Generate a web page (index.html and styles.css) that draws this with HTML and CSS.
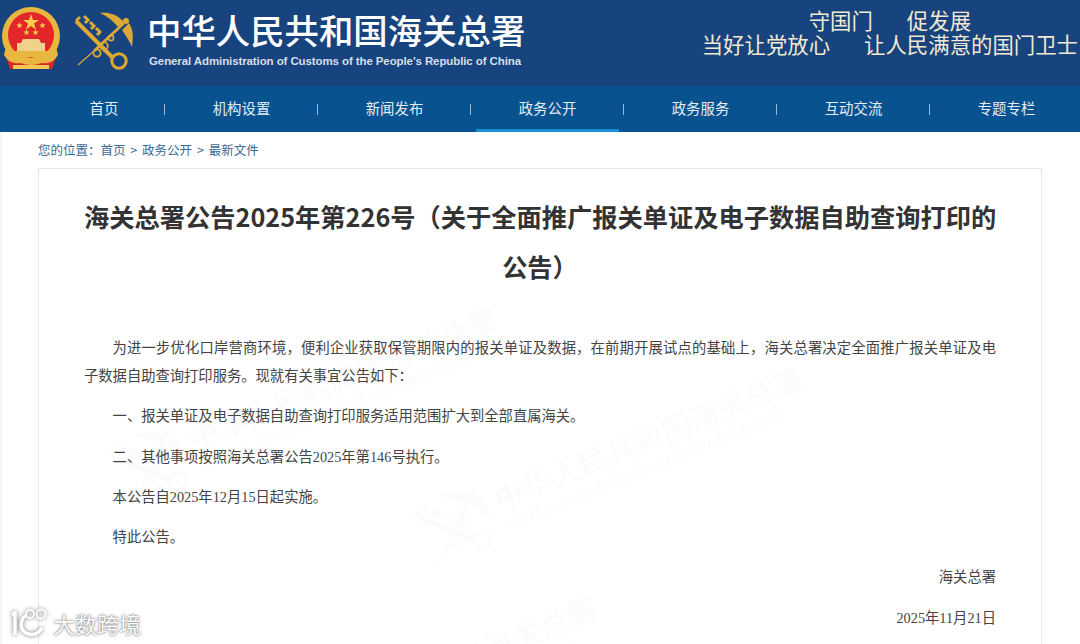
FILE: index.html
```html
<!DOCTYPE html>
<html lang="zh-CN">
<head>
  <meta charset="UTF-8">
  <title>海关总署公告2025年第226号</title>
  <link rel="stylesheet" href="styles.css">
</head>
<body>

  <svg class="defs" width="0" height="0" aria-hidden="true">
    <symbol id="customs-mark" viewBox="0 0 60 60">
      <!-- caduceus -->
      <path d="M4 54 L20 40" fill="none" stroke="currentColor" stroke-width="1.2"/>
      <path d="M20 40 L50 12" fill="none" stroke="currentColor" stroke-width="2.8"/>
      <circle cx="52" cy="10" r="3" fill="currentColor"/>
      <path d="M50 11 C43 3 34 1 26 2 C33 5 38 9 44 16 Z" fill="currentColor"/>
      <path d="M55 12 C60 20 59 28 58 36 C55 29 52 25 48 19 Z" fill="currentColor"/>
      <circle cx="30" cy="35" r="3.8" fill="none" stroke="currentColor" stroke-width="1.8"/>
      <circle cx="23" cy="42" r="3.6" fill="none" stroke="currentColor" stroke-width="1.8"/>
      <circle cx="37" cy="27" r="2.6" fill="none" stroke="currentColor" stroke-width="1.6"/>
      <!-- key -->
      <path d="M2 10 L39 47" fill="none" stroke="currentColor" stroke-width="4"/>
      <path d="M6 6 L2 10 M10 5 L14 9 L11 12 M16 11 L20 15 L17 18 M22 17 L26 21 L23 24" fill="none" stroke="currentColor" stroke-width="3"/>
      <circle cx="45" cy="50" r="7.2" fill="none" stroke="currentColor" stroke-width="3"/>
    </symbol>
  </svg>

  <header class="top">
    <svg class="emblem" width="60" height="64" viewBox="0 0 60 64" aria-hidden="true">
      <path d="M9 44 L5 50 L9 62 L51 62 L55 50 L51 44 Z" fill="#d9272a"/>
      <circle cx="30" cy="29" r="29" fill="#eab73e"/>
      <circle cx="30" cy="28" r="23" fill="#e2262a"/>
      <polygon points="30,7 32,13 38,13 33,16.500 35,22.500 30,19 25,22.500 27,16.500 22,13 28,13" fill="#f6d04d"/>
      <polygon points="18.500,15 19.300,17.400 21.800,17.400 19.800,18.900 20.500,21.300 18.500,19.800 16.500,21.300 17.200,18.900 15.200,17.400 17.700,17.400" fill="#f6d04d"/>
      <polygon points="41.500,15 42.300,17.400 44.800,17.400 42.800,18.900 43.500,21.300 41.500,19.800 39.500,21.300 40.200,18.900 38.200,17.400 40.700,17.400" fill="#f6d04d"/>
      <polygon points="25.500,22 26.300,24.400 28.800,24.400 26.800,25.900 27.500,28.300 25.500,26.800 23.500,28.300 24.200,25.900 22.200,24.400 24.700,24.400" fill="#f6d04d"/>
      <polygon points="34.500,22 35.300,24.400 37.800,24.400 35.800,25.900 36.500,28.300 34.500,26.800 32.500,28.300 33.200,25.900 31.200,24.400 33.700,24.400" fill="#f6d04d"/>
      <path d="M22 32 H38 L40 36 H44 V44 H16 V36 H20 Z" fill="#f2d28a"/>
      <path d="M8 44 H52 L46 50 H14 Z" fill="#eab73e"/>
      <path d="M5 40 C10 54 20 48 30 51 C40 48 50 54 55 40 L57 48 C50 60 40 55 30 56 C20 55 10 60 3 48 Z" fill="#eab73e"/>
      <path d="M12 58 H48 V62 H12 Z" fill="#f2c653"/>
    </svg>
    <svg class="mark" width="60" height="60" aria-hidden="true"><use href="#customs-mark"/></svg>
    <div class="brand">
      <div class="brand-cn">中华人民共和国海关总署</div>
      <div class="brand-en">General Administration of Customs of the People's Republic of China</div>
    </div>
    <div class="slogan">
      <div class="slogan-row"><span>守国门</span><span>促发展</span></div>
      <div class="slogan-row"><span>当好让党放心</span><span>让人民满意的国门卫士</span></div>
    </div>
  </header>

  <nav class="nav">
    <a class="nav-item first">首页</a>
    <a class="nav-item">机构设置</a>
    <a class="nav-item">新闻发布</a>
    <a class="nav-item active">政务公开</a>
    <a class="nav-item">政务服务</a>
    <a class="nav-item">互动交流</a>
    <a class="nav-item last">专题专栏</a>
  </nav>

  <div class="crumbs">您的位置：<a>首页</a> &gt; <a>政务公开</a> &gt; <a>最新文件</a></div>

  <main class="card">
    <div class="wm wm-a" aria-hidden="true">
      <svg class="wm-mark" width="72" height="72"><use href="#customs-mark"/></svg>
      <div><div class="wm-cn">中华人民共和国海关总署</div><div class="wm-en">GENERAL ADMINISTRATION OF CUSTOMS P.R.CHINA</div></div>
    </div>
    <div class="wm wm-b" aria-hidden="true">
      <svg class="wm-mark" width="72" height="72"><use href="#customs-mark"/></svg>
      <div><div class="wm-cn">中华人民共和国海关总署</div><div class="wm-en">GENERAL ADMINISTRATION OF CUSTOMS P.R.CHINA</div></div>
    </div>
    <div class="wm wm-c" aria-hidden="true">
      <svg class="wm-mark" width="72" height="72"><use href="#customs-mark"/></svg>
      <div><div class="wm-cn">中华人民共和国海关总署</div><div class="wm-en">GENERAL ADMINISTRATION OF CUSTOMS P.R.CHINA</div></div>
    </div>

    <h1>海关总署公告2025年第226号（关于全面推广报关单证及电子数据自助查询打印的<br>公告）</h1>

    <div class="text">
      <p class="lead">为进一步优化口岸营商环境，便利企业获取保管期限内的报关单证及数据，在前期开展试点的基础上，海关总署决定全面推广报关单证及电子数据自助查询打印服务。现就有关事宜公告如下：</p>
      <p>一、报关单证及电子数据自助查询打印服务适用范围扩大到全部直属海关。</p>
      <p>二、其他事项按照海关总署公告2025年第146号执行。</p>
      <p>本公告自2025年12月15日起实施。</p>
      <p>特此公告。</p>
      <p class="sign">海关总署</p>
      <p class="sign">2025年11月21日</p>
    </div>
  </main>

  <div class="stamp">
    <svg width="42" height="30" viewBox="0 0 42 30" aria-hidden="true">
      <path d="M3 7 L6 5 V27" fill="none" stroke="#fff" stroke-width="3.4"/>
      <path d="M18 7 C11 10 10 21 17 25 C23 28 29 26 33 20" fill="none" stroke="#fff" stroke-width="3.4"/>
      <circle cx="21" cy="6" r="4" fill="none" stroke="#fff" stroke-width="1.8"/>
      <circle cx="32" cy="6" r="4.500" fill="none" stroke="#fff" stroke-width="1.8"/>
    </svg>
    <span>大数跨境</span>
  </div>

</body>
</html>
```
FILE: styles.css
```css
html, body {
  margin: 0;
  height: 644px;
  overflow: hidden;
  background-color: #ffffff;
}

body {
  font-family: "Liberation Serif", "Noto Sans CJK SC", serif;
  font-size: 14.3px;
  color: #444444;
  position: relative;
  box-shadow: inset 2px 0 0 #f5f5f5;
}

.defs {
  position: absolute;
}

/* 顶部 */
.top {
  height: 86px;
  background-color: #17437e;
  display: flex;
  align-items: flex-start;
  font-family: "Noto Sans CJK SC", sans-serif;
}

.emblem {
  margin: 7px 0 0 1px;
  flex: none;
}

.mark {
  margin: 11px 0 0 13px;
  flex: none;
  color: #dca934;
}

.brand {
  margin: 7px 0 0 13px;
  width: 400px;
  flex: none;
}

.brand-cn {
  font-size: 34.4px;
  line-height: 44px;
  font-weight: 500;
  color: #ffffff;
  white-space: nowrap;
}

.brand-en {
  font-family: "Liberation Sans", sans-serif;
  font-size: 11.5px;
  font-weight: bold;
  line-height: 16px;
  margin: 2px 0 0 2px;
  color: #d6dfea;
  letter-spacing: -0.1px;
  white-space: nowrap;
}

.slogan {
  margin: 8px 0 0 auto;
  padding-right: 2px;
  color: #f1e9d2;
  font-size: 21.4px;
  line-height: 24px;
  text-align: center;
}

.slogan-row {
  display: flex;
  justify-content: center;
  gap: 34px;
}

/* 导航 */
.nav {
  height: 46px;
  background-color: #08528f;
  display: flex;
  padding-left: 43px;
  overflow: hidden;
}

.nav-item {
  flex: none;
  width: 153px;
  box-sizing: border-box;
  text-align: center;
  line-height: 43px;
  font-family: "Noto Sans CJK SC", sans-serif;
  font-size: 14.4px;
  color: #e4edf5;
  position: relative;
}

.nav-item.first {
  width: 122px;
}

.nav-item::after {
  content: "";
  position: absolute;
  right: 0;
  top: 18px;
  width: 1px;
  height: 11px;
  background-color: #9db9d4;
}

.nav-item.last::after {
  display: none;
}

.nav-item.active::before {
  content: "";
  position: absolute;
  left: 5px;
  right: 5px;
  bottom: 0;
  height: 3px;
  background-color: #1a8fd8;
}

/* 面包屑 */
.crumbs {
  height: 36px;
  line-height: 36px;
  padding-left: 38px;
  font-family: "Noto Sans CJK SC", sans-serif;
  font-size: 12.5px;
  word-spacing: 2px;
  color: #3b6a94;
}

/* 正文 */
.card {
  position: relative;
  margin: 0 38px;
  width: 1004px;
  height: 476px;
  box-sizing: border-box;
  border: 1px solid #e8e8e8;
  border-bottom: none;
  padding: 22px 45px 0;
  overflow: hidden;
}

h1 {
  position: relative;
  margin: 0;
  font-family: "Noto Sans CJK SC", sans-serif;
  font-size: 25.25px;
  line-height: 50px;
  font-weight: bold;
  text-align: center;
  white-space: nowrap;
  color: #333333;
}

.text {
  position: relative;
  margin-top: 43px;
  line-height: 28px;
}

.text p {
  margin: 0 0 12.3px;
  text-indent: 2em;
  text-align: justify;
}

.text p.sign {
  text-align: right;
  text-indent: 0;
}

/* 水印 */
.wm {
  position: absolute;
  display: flex;
  align-items: center;
  gap: 10px;
  color: #fafbfd;
  transform: rotate(-22deg);
  transform-origin: left center;
  white-space: nowrap;
}

.wm-a {
  left: 384px;
  top: 334px;
}

.wm-b {
  left: 79px;
  top: 274px;
}

.wm-c {
  left: 179px;
  top: 564px;
}

.wm-mark {
  flex: none;
}

.wm-cn {
  font-size: 29px;
  line-height: 38px;
  letter-spacing: 1px;
}

.wm-en {
  font-size: 12px;
  line-height: 16px;
}

/* 左下角标识 */
.stamp {
  position: absolute;
  left: 9px;
  bottom: 6px;
  display: flex;
  align-items: center;
  gap: 2px;
  font-family: "Noto Sans CJK SC", sans-serif;
  font-size: 22px;
  line-height: 30px;
  color: #ffffff;
  text-shadow: 0 0 3px #777777, 0 0 1px #777777;
}

.stamp svg {
  filter: drop-shadow(0 0 2px #777777);
}
```
